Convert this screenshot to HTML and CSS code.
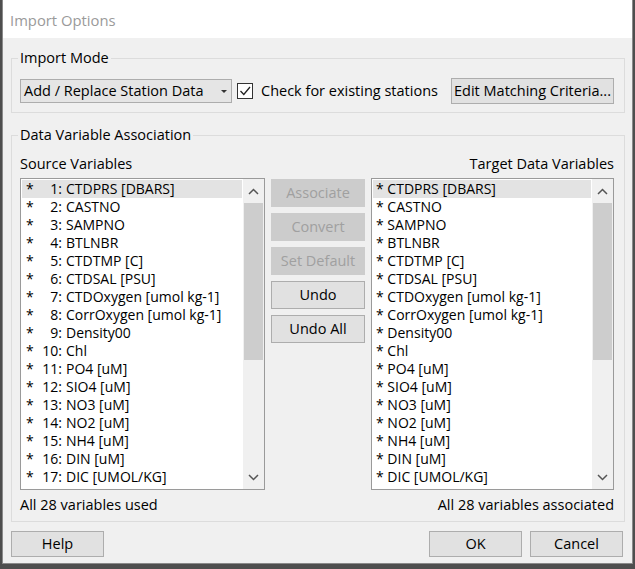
FILE: index.html
```html
<!DOCTYPE html>
<html>
<head>
<meta charset="utf-8">
<title>Import Options</title>
<link rel="stylesheet" href="styles.css">
</head>
<body>
<div class="window">
  <div class="titlebar">Import Options</div>
  <div class="content">
    <fieldset class="group g1">
      <legend>Import Mode</legend>
      <div class="mode-row">
        <div class="combo"><span>Add / Replace Station Data</span><span class="caret"></span></div>
        <div class="check"><svg width="14" height="14" viewBox="0 0 14 14"><polyline points="2.5,7 5.8,10.5 12,3" fill="none" stroke="#222" stroke-width="1.3"/></svg></div>
        <span class="check-label">Check for existing stations</span>
        <button class="btn btn-edit">Edit Matching Criteria...</button>
      </div>
    </fieldset>

    <fieldset class="group g2">
      <legend>Data Variable Association</legend>
      <div class="assoc">
        <div class="col-label">Source Variables</div>
        <div></div>
        <div class="col-label right">Target Data Variables</div>

        <div class="listbox">
          <ul class="rows src">
            <li class="sel"><span class="star">*</span><span class="num">1:</span><span class="name">CTDPRS [DBARS]</span></li>
            <li><span class="star">*</span><span class="num">2:</span><span class="name">CASTNO</span></li>
            <li><span class="star">*</span><span class="num">3:</span><span class="name">SAMPNO</span></li>
            <li><span class="star">*</span><span class="num">4:</span><span class="name">BTLNBR</span></li>
            <li><span class="star">*</span><span class="num">5:</span><span class="name">CTDTMP [C]</span></li>
            <li><span class="star">*</span><span class="num">6:</span><span class="name">CTDSAL [PSU]</span></li>
            <li><span class="star">*</span><span class="num">7:</span><span class="name">CTDOxygen [umol kg-1]</span></li>
            <li><span class="star">*</span><span class="num">8:</span><span class="name">CorrOxygen [umol kg-1]</span></li>
            <li><span class="star">*</span><span class="num">9:</span><span class="name">Density00</span></li>
            <li><span class="star">*</span><span class="num">10:</span><span class="name">Chl</span></li>
            <li><span class="star">*</span><span class="num">11:</span><span class="name">PO4 [uM]</span></li>
            <li><span class="star">*</span><span class="num">12:</span><span class="name">SIO4 [uM]</span></li>
            <li><span class="star">*</span><span class="num">13:</span><span class="name">NO3 [uM]</span></li>
            <li><span class="star">*</span><span class="num">14:</span><span class="name">NO2 [uM]</span></li>
            <li><span class="star">*</span><span class="num">15:</span><span class="name">NH4 [uM]</span></li>
            <li><span class="star">*</span><span class="num">16:</span><span class="name">DIN [uM]</span></li>
            <li><span class="star">*</span><span class="num">17:</span><span class="name">DIC [UMOL/KG]</span></li>
          </ul>
          <div class="vscroll">
            <div class="sb-btn"><svg width="11" height="7" viewBox="0 0 11 7"><polyline points="1,6 5.5,1.5 10,6" fill="none" stroke="#555" stroke-width="1.5"/></svg></div>
            <div class="sb-thumb"></div>
            <div class="sb-track"></div>
            <div class="sb-btn"><svg width="11" height="7" viewBox="0 0 11 7"><polyline points="1,1 5.5,5.5 10,1" fill="none" stroke="#555" stroke-width="1.5"/></svg></div>
          </div>
        </div>

        <div class="actions">
          <button class="btn disabled">Associate</button>
          <button class="btn disabled">Convert</button>
          <button class="btn disabled">Set Default</button>
          <button class="btn">Undo</button>
          <button class="btn">Undo All</button>
        </div>

        <div class="listbox">
          <ul class="rows tgt">
            <li class="sel">* CTDPRS [DBARS]</li>
            <li>* CASTNO</li>
            <li>* SAMPNO</li>
            <li>* BTLNBR</li>
            <li>* CTDTMP [C]</li>
            <li>* CTDSAL [PSU]</li>
            <li>* CTDOxygen [umol kg-1]</li>
            <li>* CorrOxygen [umol kg-1]</li>
            <li>* Density00</li>
            <li>* Chl</li>
            <li>* PO4 [uM]</li>
            <li>* SIO4 [uM]</li>
            <li>* NO3 [uM]</li>
            <li>* NO2 [uM]</li>
            <li>* NH4 [uM]</li>
            <li>* DIN [uM]</li>
            <li>* DIC [UMOL/KG]</li>
          </ul>
          <div class="vscroll">
            <div class="sb-btn"><svg width="11" height="7" viewBox="0 0 11 7"><polyline points="1,6 5.5,1.5 10,6" fill="none" stroke="#555" stroke-width="1.5"/></svg></div>
            <div class="sb-thumb"></div>
            <div class="sb-track"></div>
            <div class="sb-btn"><svg width="11" height="7" viewBox="0 0 11 7"><polyline points="1,1 5.5,5.5 10,1" fill="none" stroke="#555" stroke-width="1.5"/></svg></div>
          </div>
        </div>

        <div class="status">All 28 variables used</div>
        <div></div>
        <div class="status right">All 28 variables associated</div>
      </div>
    </fieldset>

    <div class="footer">
      <button class="btn foot">Help</button>
      <div class="spacer"></div>
      <button class="btn foot">OK</button>
      <button class="btn foot">Cancel</button>
    </div>
  </div>
</div>
</body>
</html>
```

FILE: styles.css
```css
html, body {
  margin: 0;
  padding: 0;
  background: #4e4e4e;
}
body {
  font-family: "Open Sans", "Noto Sans", sans-serif;
  font-size: 14.5px;
  color: #000;
}
.window {
  margin-left: 2px;
  width: 631px;
  height: 564px;
  box-sizing: border-box;
  border: 1px solid #8a8a8a;
  border-top: none;
  background: #f0f0f0;
  display: flex;
  flex-direction: column;
}
.titlebar {
  height: 38px;
  flex: none;
  background: #fff;
  padding: 2px 0 0 7px;
  box-sizing: border-box;
  color: #9a9a9a;
  font-size: 14.8px;
  display: flex;
  align-items: center;
}
.content {
  padding: 0 7px 0 8px;
}
.group {
  margin: 0;
  border: 1px solid #dcdcdc;
  padding: 0 10px 7px 8px;
  min-width: 0;
}
.group legend {
  padding: 0 2px;
  margin-left: -2px;
  line-height: 18px;
}
.g1 {
  margin-top: 11px;
  padding-top: 11px;
  padding-bottom: 8px;
}
.mode-row {
  display: flex;
  align-items: center;
  height: 26px;
}
.combo {
  width: 212px;
  height: 24px;
  box-sizing: border-box;
  background: #e5e5e5;
  border: 1px solid #adadad;
  padding: 0 3px 0 3px;
  display: flex;
  align-items: center;
  justify-content: space-between;
  line-height: 18px;
}
.caret {
  width: 0;
  height: 0;
  border-left: 3px solid transparent;
  border-right: 3px solid transparent;
  border-top: 3px solid #333;
  margin-right: 1px;
}
.check {
  margin-left: 5px;
  width: 16px;
  height: 16px;
  box-sizing: border-box;
  border: 1px solid #333;
  background: #fff;
  display: flex;
  align-items: center;
  justify-content: center;
}
.check-label {
  margin-left: 8px;
  line-height: 18px;
}
.btn {
  font-family: inherit;
  font-size: 14.5px;
  color: #000;
  background: #e1e1e1;
  border: 1px solid #adadad;
  padding: 0;
  margin: 0;
  box-sizing: border-box;
  line-height: 18px;
}
.btn.disabled {
  background: #cccccc;
  border-color: #cccccc;
  color: #a0a0a0;
}
.btn-edit {
  margin-left: auto;
  width: 163px;
  height: 26px;
  white-space: nowrap;
}
.g2 {
  margin-top: 13px;
  padding-top: 11px;
  padding-bottom: 7px;
}
.assoc {
  display: grid;
  grid-template-columns: 245px 94px 243px;
  column-gap: 6px;
}
.col-label {
  line-height: 18px;
}
.right {
  text-align: right;
}
.listbox {
  margin-top: 5px;
  height: 312px;
  box-sizing: border-box;
  border: 1px solid #9a9a9a;
  background: #fff;
  display: flex;
}
.rows {
  list-style: none;
  margin: 0;
  padding: 1px;
  flex: 1;
  overflow: hidden;
  min-width: 0;
  font-size: 14px;
}
.rows li {
  height: 18px;
  line-height: 18px;
  white-space: nowrap;
}
.rows li.sel {
  background: #e3e3e3;
}
.src li {
  padding-left: 4px;
}
.src .star {
  display: inline-block;
  width: 16px;
}
.src .num {
  display: inline-block;
  width: 20px;
  text-align: right;
}
.src .name {
  padding-left: 4px;
}
.tgt li {
  padding-left: 3px;
}
.vscroll {
  width: 21px;
  flex: none;
  background: #f0f0f0;
  display: flex;
  flex-direction: column;
}
.sb-btn {
  height: 24px;
  flex: none;
  display: flex;
  align-items: center;
  justify-content: center;
}
.sb-thumb {
  height: 157px;
  flex: none;
  margin: 0 1px;
  background: #cdcdcd;
}
.sb-track {
  flex: 1;
}
.actions {
  margin-top: 6px;
  display: flex;
  flex-direction: column;
  gap: 6px;
}
.actions .btn {
  height: 28px;
  width: 94px;
}
.status {
  margin-top: 6px;
  line-height: 18px;
}
.footer {
  margin-top: 9px;
  display: flex;
  gap: 8px;
  padding-right: 2px;
}
.spacer {
  flex: 1;
}
.btn.foot {
  width: 93px;
  height: 26px;
}
```
